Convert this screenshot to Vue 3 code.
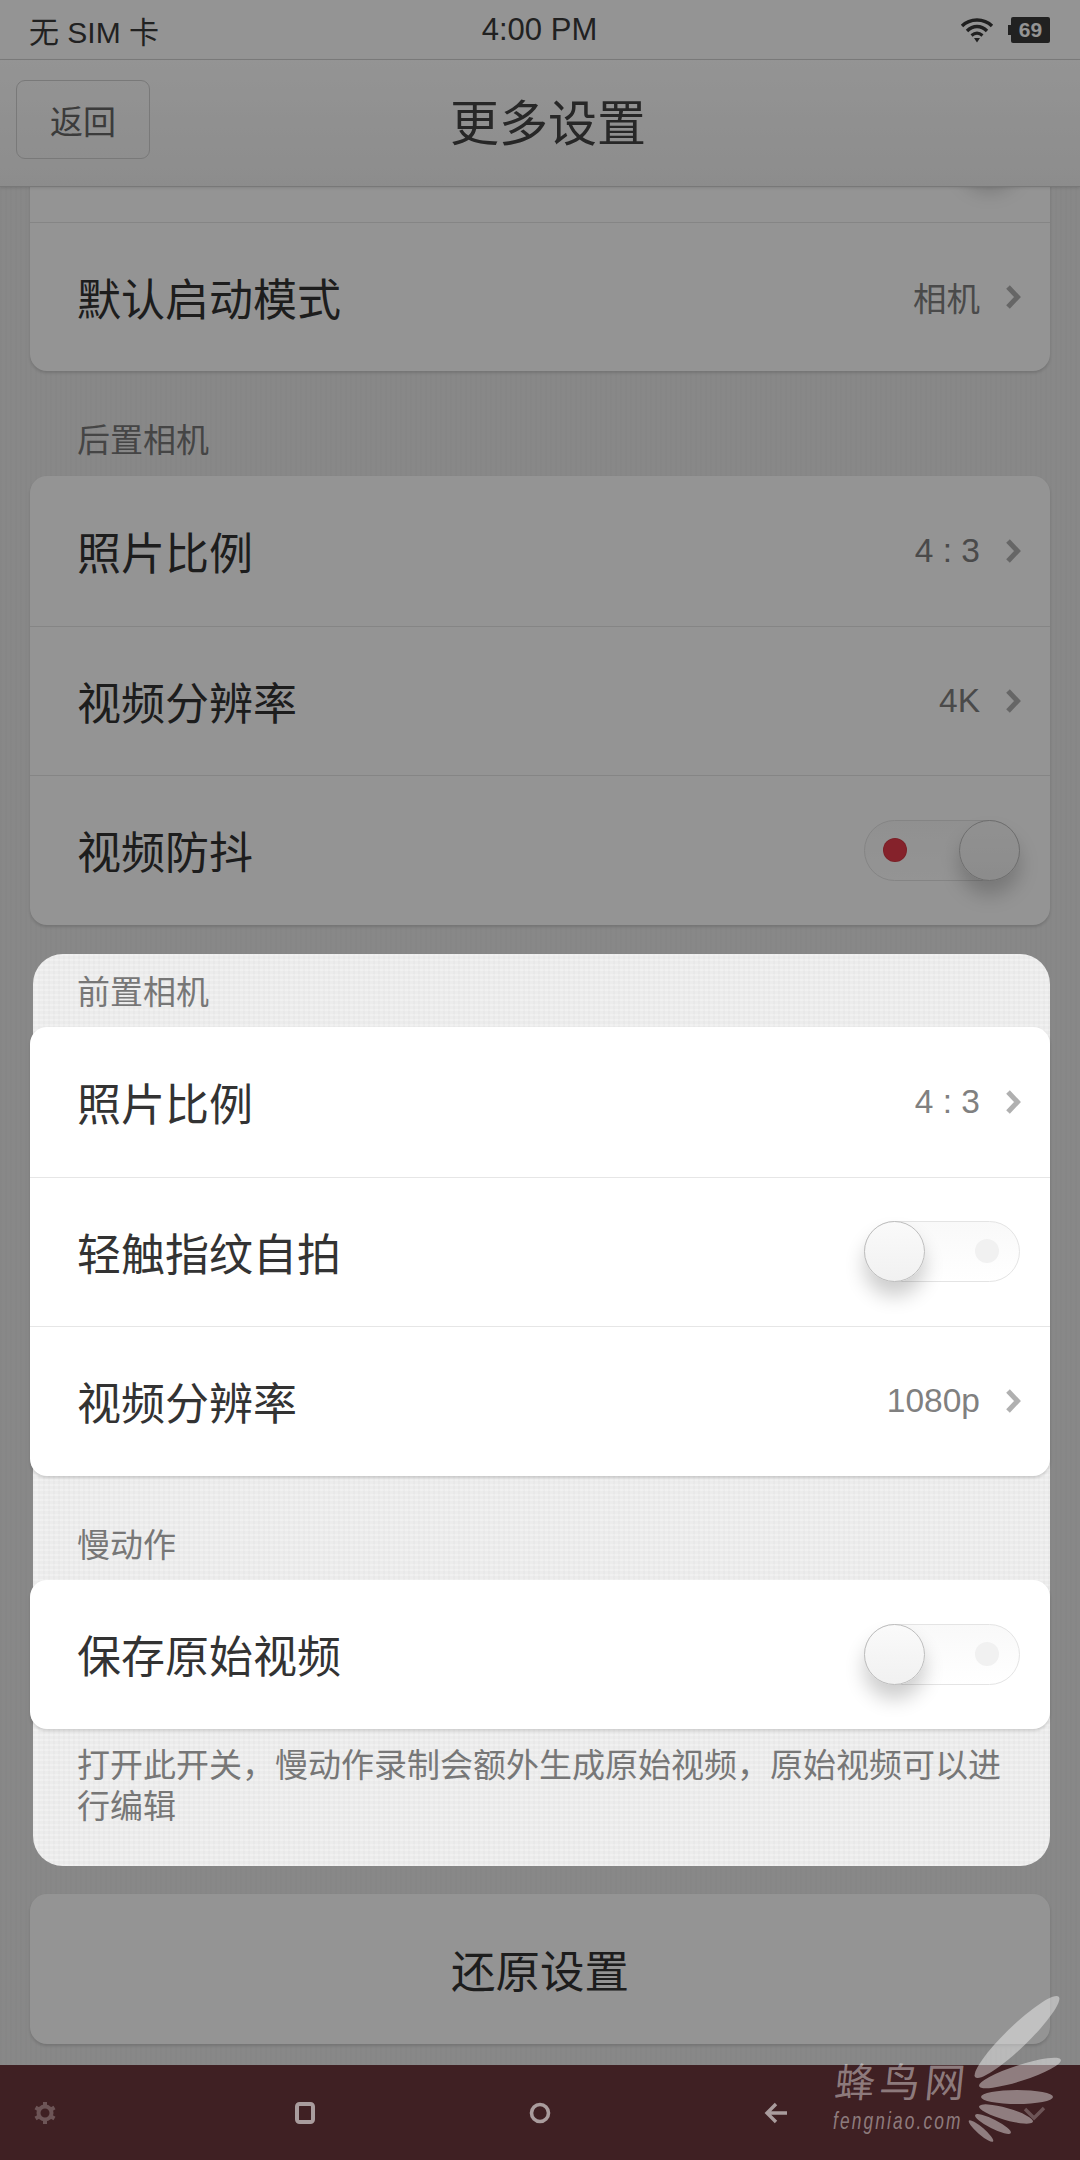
<script setup>
const topRows = [
  { title: '保存地理位置', toggle: 'on' },
  { title: '默认启动模式', value: '相机' }
]
const rearRows = [
  { title: '照片比例', value: '4 : 3' },
  { title: '视频分辨率', value: '4K' },
  { title: '视频防抖', toggle: 'on' }
]
const frontRows = [
  { title: '照片比例', value: '4 : 3' },
  { title: '轻触指纹自拍', toggle: 'off' },
  { title: '视频分辨率', value: '1080p' }
]
const slowRows = [{ title: '保存原始视频', toggle: 'off' }]
const groups = [topRows, rearRows]
const feathers = [
  { cx: 1017, cy: 2037, rx: 58, ry: 11, a: -44 },
  { cx: 1020, cy: 2073, rx: 43, ry: 8, a: -18 },
  { cx: 1017, cy: 2097, rx: 36, ry: 7, a: 0 },
  { cx: 1006, cy: 2114, rx: 28, ry: 6, a: 16 },
  { cx: 993, cy: 2124, rx: 20, ry: 4.5, a: 27 },
  { cx: 981, cy: 2131, rx: 16, ry: 3.5, a: 41 }
]
</script>

<template>
  <div class="screen">
    <header class="status">
      <span class="carrier">无 SIM 卡</span>
      <span class="clock">4:00 PM</span>
      <div class="indicators">
        <svg class="wifi" width="34" height="26" viewBox="0 0 34 26">
          <path d="M2 9 C10 1 24 1 32 9" fill="none" stroke="#383838" stroke-width="3.4" />
          <path d="M7 14 C13 8 21 8 27 14" fill="none" stroke="#383838" stroke-width="3.4" />
          <path d="M11.5 18.5 C15 15.5 19 15.5 22.5 18.5" fill="none" stroke="#383838" stroke-width="3" />
          <path d="M14 21 H20 L17 25.5 Z" fill="#383838" />
        </svg>
        <div class="battery"><span>69</span></div>
      </div>
    </header>

    <nav class="navbar">
      <button class="back">返回</button>
      <h1 class="title">更多设置</h1>
    </nav>

    <main class="viewport">
      <div class="content">
        <template v-for="(rows, g) in groups" :key="g">
          <div v-if="g === 1" class="label">后置相机</div>
          <section class="card">
            <div v-for="row in rows" :key="row.title" class="row">
              <span class="row-title">{{ row.title }}</span>
              <div v-if="row.toggle" class="toggle" :class="row.toggle">
                <i class="dot"></i><i class="thumb"></i>
              </div>
              <div v-else class="row-value">
                <span>{{ row.value }}</span>
                <svg width="16" height="26" viewBox="0 0 16 26"><path d="M3 3 L12.5 13 L3 23" fill="none" stroke="#b0b0b0" stroke-width="5" /></svg>
              </div>
            </div>
          </section>
        </template>
        <section class="card restore">还原设置</section>
      </div>
    </main>

    <footer class="softkeys">
      <svg class="key" width="28" height="28" viewBox="0 0 28 28">
        <circle cx="14" cy="14" r="6.5" fill="none" stroke="#6d5557" stroke-width="4" />
        <path d="M14 3 V7 M14 21 V25 M4.5 8.5 L8 10.5 M20 17.5 L23.5 19.5 M4.5 19.5 L8 17.5 M20 10.5 L23.5 8.5" stroke="#6d5557" stroke-width="4" />
      </svg>
      <svg class="key" width="28" height="28" viewBox="0 0 28 28">
        <rect x="6" y="5" width="16" height="18" rx="2.5" fill="none" stroke="#a99c9d" stroke-width="4" />
      </svg>
      <svg class="key" width="28" height="28" viewBox="0 0 28 28">
        <circle cx="14" cy="14" r="8.5" fill="none" stroke="#a99c9d" stroke-width="3.6" />
      </svg>
      <svg class="key" width="28" height="28" viewBox="0 0 28 28">
        <path d="M14 5 L5 14 L14 23 M5.5 14 H25" fill="none" stroke="#a99c9d" stroke-width="3.4" />
      </svg>
      <svg class="key" width="28" height="28" viewBox="0 0 28 28">
        <path d="M5 10 L14 19 L24 9" fill="none" stroke="#6d5557" stroke-width="3.4" />
      </svg>
    </footer>

    <div class="scrim"></div>

    <aside class="popup">
      <div class="popup-label first">前置相机</div>
      <section class="card sheet">
        <div v-for="row in frontRows" :key="row.title" class="row">
          <span class="row-title">{{ row.title }}</span>
          <div v-if="row.toggle" class="toggle" :class="row.toggle">
            <i class="dot"></i><i class="thumb"></i>
          </div>
          <div v-else class="row-value">
            <span>{{ row.value }}</span>
            <svg width="16" height="26" viewBox="0 0 16 26"><path d="M3 3 L12.5 13 L3 23" fill="none" stroke="#b0b0b0" stroke-width="5" /></svg>
          </div>
        </div>
      </section>
      <div class="popup-label slow">慢动作</div>
      <section class="card sheet">
        <div v-for="row in slowRows" :key="row.title" class="row">
          <span class="row-title">{{ row.title }}</span>
          <div class="toggle" :class="row.toggle"><i class="dot"></i><i class="thumb"></i></div>
        </div>
      </section>
      <p class="note">打开此开关，慢动作录制会额外生成原始视频，原始视频可以进行编辑</p>
    </aside>

    <div class="mark">
      <svg class="feathers" width="1080" height="2160" viewBox="0 0 1080 2160">
        <ellipse v-for="f in feathers" :key="f.cy" :cx="f.cx" :cy="f.cy" :rx="f.rx" :ry="f.ry" :transform="`rotate(${f.a} ${f.cx} ${f.cy})`" fill="#ffffff" fill-opacity="0.42" />
      </svg>
      <div class="mark-cn">蜂鸟网</div>
      <div class="mark-en">fengniao.com</div>
    </div>
  </div>
</template>

<style>
html, body { margin: 0; padding: 0; background: #000; }
</style>

<style scoped>
.screen {
  position: relative;
  width: 1080px;
  height: 2160px;
  overflow: hidden;
  display: flex;
  flex-direction: column;
  font-family: "Liberation Sans", "Noto Sans CJK SC", sans-serif;
  color: #333;
  background: #eaeaea;
}
.status {
  flex: none;
  height: 59px;
  box-sizing: content-box;
  border-bottom: 1px solid #d6d6d6;
  background: #ffffff;
  display: grid;
  grid-template-columns: 1fr auto 1fr;
  align-items: center;
  padding: 0 30px 0 29px;
  font-size: 30px;
  color: #3a3a3a;
  position: relative;
  z-index: 3;
}
.clock { font-size: 31px; }
.indicators {
  justify-self: end;
  display: flex;
  align-items: center;
  gap: 17px;
}
.wifi { display: block; }
.battery {
  position: relative;
  width: 39px;
  height: 26px;
  background: #3a3a3a;
  border-radius: 2px;
  display: flex;
  align-items: center;
  justify-content: center;
  color: #fff;
  font-size: 21px;
  font-weight: 700;
}
.battery::before {
  content: "";
  position: absolute;
  left: -3px;
  top: 8px;
  width: 3px;
  height: 10px;
  background: #3a3a3a;
}
.navbar {
  flex: none;
  height: 127px;
  box-sizing: border-box;
  background: linear-gradient(#ffffff, #f2f2f2);
  border-bottom: 1px solid #cfcfcf;
  box-shadow: 0 1px 3px rgba(0,0,0,.12);
  display: grid;
  grid-template-columns: 1fr auto 1fr;
  align-items: center;
  padding-left: 16px;
  position: relative;
  z-index: 3;
}
.back {
  justify-self: start;
  width: 134px;
  height: 79px;
  padding: 0;
  margin-top: -7px;
  background: transparent;
  border: 1px solid #d0d0d0;
  border-radius: 9px;
  font: inherit;
  font-size: 33px;
  color: #666;
}
.title {
  margin: -7px 0 0;
  font-size: 49px;
  font-weight: 400;
  color: #444;
}
.viewport {
  flex: 1;
  min-height: 0;
  overflow: hidden;
  padding: 0 30px;
  background-color: #eaeaea;
  background-image: repeating-linear-gradient(90deg, rgba(0,0,0,.012) 0 2px, transparent 2px 5px);
}
.content { margin-top: -115px; }
.card {
  background: #fff;
  border-radius: 17px;
  box-shadow: 0 2px 3px rgba(0,0,0,.14);
}
.row {
  height: 149.5px;
  box-sizing: border-box;
  display: flex;
  align-items: center;
  justify-content: space-between;
  padding: 0 30px 0 47px;
  border-top: 1px solid #e6e6e6;
}
.row:first-child { border-top: 0; }
.row-title { font-size: 44px; color: #333; }
.row-value {
  display: flex;
  align-items: center;
  gap: 25px;
  margin-right: -1px;
  font-size: 33.5px;
  color: #808080;
}
.row-value svg { display: block; }
.toggle {
  position: relative;
  width: 156px;
  height: 61px;
  box-sizing: border-box;
  border: 1px solid #e4e4e4;
  border-radius: 31px;
  background: linear-gradient(#f9f9f9, #fff);
}
.thumb {
  position: absolute;
  top: -1px;
  width: 61px;
  height: 61px;
  box-sizing: border-box;
  border: 1px solid #bdbdbd;
  border-radius: 50%;
  background: linear-gradient(#fafafa, #f1f1f1);
  box-shadow: 0 14px 20px rgba(0,0,0,.2);
}
.dot {
  position: absolute;
  top: 17px;
  width: 24px;
  height: 24px;
  border-radius: 50%;
}
.toggle.on .thumb { right: -1px; }
.toggle.on .dot { left: 18px; background: #e63c4a; box-shadow: inset 0 0 0 1px rgba(0,0,0,.08); }
.toggle.off .thumb { left: -1px; }
.toggle.off .dot { right: 20px; background: #f1f1f1; }
.label {
  height: 105px;
  box-sizing: border-box;
  padding: 48px 0 0 47px;
  font-size: 33px;
  line-height: 44px;
  color: #777;
}
.restore {
  margin-top: 969px;
  height: 150px;
  display: flex;
  align-items: center;
  justify-content: center;
  font-size: 44.5px;
  color: #333;
}
.softkeys {
  flex: none;
  height: 95px;
  background: #3f2023;
  display: grid;
  grid-template-columns: repeat(5, 1fr);
  align-items: center;
  justify-items: center;
  padding: 0 0 0 0;
  position: relative;
  z-index: 3;
}
.key { display: block; }
.key:nth-child(1) { transform: translateX(-63px); }
.key:nth-child(2) { transform: translateX(-19px); }
.key:nth-child(4) { transform: translateX(20px); }
.key:nth-child(5) { transform: translateX(62px); }
.scrim {
  position: absolute;
  inset: 0 0 95px 0;
  background: rgba(0,0,0,.42);
  z-index: 4;
}
.popup {
  position: absolute;
  left: 33px;
  top: 954px;
  width: 1017px;
  height: 912px;
  box-sizing: border-box;
  border-radius: 30px;
  background-color: #ececec;
  background-image:
    repeating-linear-gradient(90deg, rgba(0,0,0,.014) 0 2px, transparent 2px 5px),
    repeating-linear-gradient(0deg, rgba(255,255,255,.25) 0 2px, transparent 2px 5px);
  z-index: 5;
}
.popup-label {
  padding-left: 44px;
  font-size: 33px;
  line-height: 44px;
  color: #777;
}
.popup-label.first { height: 73px; padding-top: 17px; box-sizing: border-box; }
.popup-label.slow { height: 104px; padding-top: 48px; box-sizing: border-box; }
.sheet { margin-left: -3px; width: 1020px; }
.note {
  margin: 16px 0 0;
  padding: 0 30px 0 44px;
  font-size: 33px;
  line-height: 41px;
  color: #777;
}
.mark { position: absolute; inset: 0; z-index: 6; pointer-events: none; }
.feathers { position: absolute; left: 0; top: 0; }
.mark-cn {
  position: absolute;
  left: 835px;
  top: 2058px;
  font-size: 40px;
  line-height: 50px;
  letter-spacing: 5px;
  white-space: nowrap;
  color: rgba(255,255,255,.42);
  transform: skewX(-6deg);
}
.mark-en {
  position: absolute;
  left: 833px;
  top: 2106px;
  font-size: 24px;
  line-height: 30px;
  letter-spacing: 3px;
  white-space: nowrap;
  font-style: italic;
  color: rgba(255,255,255,.42);
  transform-origin: left center;
  transform: scaleX(.72);
}
</style>
